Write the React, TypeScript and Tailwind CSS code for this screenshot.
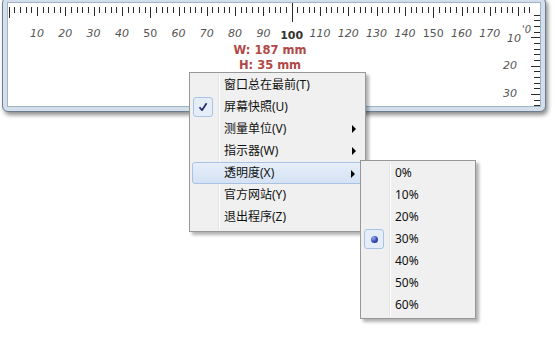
import React from "react";

const PX = 2.83;
const X0 = 0.7;
const Y0 = 6;
const LABELS = [10, 20, 30, 40, 50, 60, 70, 80, 90, 100, 110, 120, 130, 140, 150, 160, 170];

function RulerTicks() {
  const lines: React.ReactNode[] = [];
  for (let mm = 0; mm <= 184; mm += 2) {
    const x = X0 + mm * PX;
    if (x > 524) break;
    const xr = Math.round(x) + 0.5;
    let y1 = 4;
    let y2 = 10;
    if (mm === 100) {
      y1 = 0;
      y2 = 19;
    } else if (mm % 50 === 0) {
      y2 = 15;
    } else if (mm % 10 === 0) {
      y2 = 13;
    }
    lines.push(<line key={"h" + mm} x1={xr} x2={xr} y1={y1} y2={y2} />);
  }
  for (let mm = 2; mm <= 34; mm += 2) {
    const yr = Math.round(Y0 + mm * PX) + 0.5;
    const len = mm % 10 === 0 ? 9 : 6;
    lines.push(<line key={"v" + mm} x1={532 - len} x2={532} y1={yr} y2={yr} />);
  }
  return (
    <svg
      className="absolute left-0 top-0"
      width="532"
      height="103"
      stroke="#2a2a2a"
      strokeWidth="1"
      shapeRendering="crispEdges"
    >
      {lines}
    </svg>
  );
}

function Arrow() {
  return (
    <svg className="absolute right-[7px] top-[7px]" width="4" height="8" viewBox="0 0 4 8">
      <path d="M0 0 L4 4 L0 8 Z" fill="#000" />
    </svg>
  );
}

type Item = { label: string; sub?: boolean; checked?: boolean; active?: boolean };

const MAIN: Item[] = [
  { label: "窗口总在最前(T)" },
  { label: "屏幕快照(U)", checked: true },
  { label: "测量单位(V)", sub: true },
  { label: "指示器(W)", sub: true },
  { label: "透明度(X)", sub: true, active: true },
  { label: "官方网站(Y)" },
  { label: "退出程序(Z)" },
];

const SUB = ["0%", "10%", "20%", "30%", "40%", "50%", "60%"];

function MenuRow({ item }: { item: Item }) {
  return (
    <div
      className={
        item.active
          ? "relative flex h-[22px] items-center rounded-[3px] border border-[#a9c2e3] bg-gradient-to-b from-[#e6eef9] to-[#d5e2f4] pl-[31px]"
          : "relative flex h-[22px] items-center pl-[32px]"
      }
    >
      {item.checked && (
        <div className="absolute left-[1px] top-[1px] flex h-[20px] w-[20px] items-center justify-center rounded-[3px] border border-[#a8c3e6] bg-[#e4edf8]">
          <svg width="10" height="10" viewBox="0 0 10 10">
            <path d="M1.5 5.2 L4 8.2 L8.6 1.2" fill="none" stroke="#1d2b6e" strokeWidth="1.7" strokeLinejoin="round" />
          </svg>
        </div>
      )}
      <span className="text-[12px] leading-[14px] text-[#111]">{item.label}</span>
      {item.sub && <Arrow />}
    </div>
  );
}

export default function App() {
  return (
    <div className="relative h-[354px] w-[554px] overflow-hidden bg-white font-['DejaVu_Sans',sans-serif]">
      {/* Ruler window */}
      <div className="ml-[2px] mt-[-3px] h-[115px] w-[544px] rounded-[6px] border border-[#6f7e8f] bg-[#d3dfeb] p-[4px] shadow-[2px_3px_4px_rgba(0,0,0,0.45)]">
        <div className="relative h-full w-full overflow-hidden border border-[#9fb2c6] bg-white">
          <RulerTicks />
          {LABELS.map((mm) => {
            const bold = mm === 100;
            const upright = bold || mm === 50 || mm === 150;
            return (
              <span
                key={mm}
                className={
                  bold
                    ? "absolute top-[26px] -translate-x-1/2 text-[11px] font-bold leading-[13px] text-[#333]"
                    : upright
                    ? "absolute top-[24px] -translate-x-1/2 text-[11px] leading-[13px] text-[#555]"
                    : "absolute top-[24px] -translate-x-1/2 text-[11px] italic leading-[13px] text-[#555]"
                }
                style={{ left: X0 + mm * PX }}
              >
                {mm}
              </span>
            );
          })}
          <span className="absolute left-[514px] top-[21px] text-[10px] italic leading-[12px] text-[#555]">'0</span>
          <span className="absolute left-[499px] top-[29px] text-[11px] italic leading-[13px] text-[#555]">10</span>
          <span className="absolute left-[495px] top-[56px] text-[11px] italic leading-[13px] text-[#555]">20</span>
          <span className="absolute left-[495px] top-[84px] text-[11px] italic leading-[13px] text-[#555]">30</span>
          <div className="absolute left-[262px] top-[40px] flex -translate-x-1/2 flex-col items-center text-[11.5px] font-bold leading-[15px] text-[#b04848]">
            <span>W: 187 mm</span>
            <span>H: 35 mm</span>
          </div>
        </div>
      </div>

      {/* Context menu */}
      <div className="absolute left-[189px] top-[72px] w-[177px] border border-[#979797] bg-[#f0f0f0] px-[2px] pb-[3px] pt-[1px] font-['Noto_Sans','Noto_Sans_CJK_SC',sans-serif] shadow-[3px_3px_3px_rgba(0,0,0,0.3)]">
        <div className="absolute bottom-[2px] left-[28px] top-[2px] w-[2px] border-l border-[#e2e3e3] bg-white" />
        {MAIN.map((it) => (
          <MenuRow key={it.label} item={it} />
        ))}
      </div>

      {/* Submenu */}
      <div className="absolute left-[360px] top-[160px] w-[116px] border border-[#979797] bg-[#f0f0f0] px-[2px] pb-[2px] pt-[1px] font-['Noto_Sans','Noto_Sans_CJK_SC',sans-serif] shadow-[3px_3px_3px_rgba(0,0,0,0.3)]">
        <div className="absolute bottom-[2px] left-[28px] top-[2px] w-[2px] border-l border-[#e2e3e3] bg-white" />
        {SUB.map((s) => (
          <div key={s} className="relative flex h-[22px] items-center pl-[32px]">
            {s === "30%" && (
              <div className="absolute left-[1px] top-[1px] flex h-[20px] w-[20px] items-center justify-center rounded-[3px] border border-[#a8c3e6] bg-[#e4edf8]">
                <div className="h-[7px] w-[7px] rounded-full bg-[radial-gradient(circle_at_35%_30%,#9fb0ee_0%,#3a4db8_50%,#17206e_100%)]" />
              </div>
            )}
            <span className="text-[12px] leading-[14px] text-[#111]">{s}</span>
          </div>
        ))}
      </div>
    </div>
  );
}
